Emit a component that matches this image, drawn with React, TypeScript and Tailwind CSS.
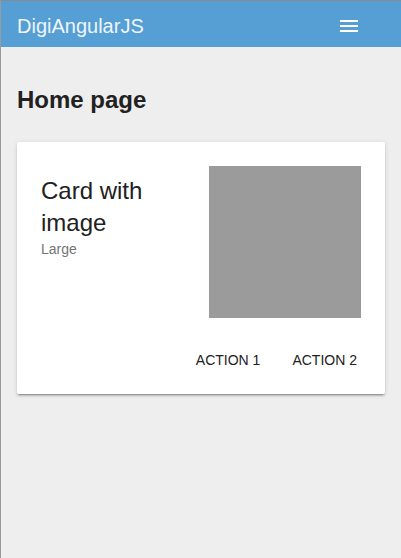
export default function App() {
  return (
    <div className="min-h-[558px] bg-[#eeeeee] border-l border-t border-l-[#9a9a9a] border-t-[#8a8a8a] font-['Liberation_Sans',Arial,sans-serif]">
      <header className="h-[46px] bg-[#569fd4] flex items-center justify-between pl-4 pr-[40px]">
        <span className="text-[20px] leading-6 text-[#eef5fb] pt-[3px]">DigiAngularJS</span>
        <svg width="24" height="24" viewBox="0 0 24 24" className="text-white mt-[4px]">
          <path fill="currentColor" d="M3 18h18v-2H3v2zm0-5h18v-2H3v2zm0-7v2h18V6H3z" />
        </svg>
      </header>

      <main className="px-4 pt-[37px]">
        <h1 className="text-[24px] leading-8 font-bold text-[#212121] mb-[26px]">Home page</h1>

        <section className="bg-white rounded-[2px] shadow-[0_2px_2px_0_rgba(0,0,0,0.14),0_3px_1px_-2px_rgba(0,0,0,0.2),0_1px_5px_0_rgba(0,0,0,0.12)]">
          <div className="flex justify-between pt-6 pr-6 pl-6">
            <div className="pt-[9px]">
              <h2 className="text-[24px] leading-8 text-[#212121] w-[152px]">Card with image</h2>
              <p className="text-[14px] leading-5 text-[#757575]">Large</p>
            </div>
            <div className="w-[152px] h-[152px] bg-[#9b9b9b]" />
          </div>
          <div className="flex justify-end pr-3 pt-6 pb-4">
            <button className="h-9 px-4 text-[14px] font-medium text-[#212121] uppercase">Action 1</button>
            <button className="h-9 px-4 text-[14px] font-medium text-[#212121] uppercase">Action 2</button>
          </div>
        </section>
      </main>
    </div>
  );
}
